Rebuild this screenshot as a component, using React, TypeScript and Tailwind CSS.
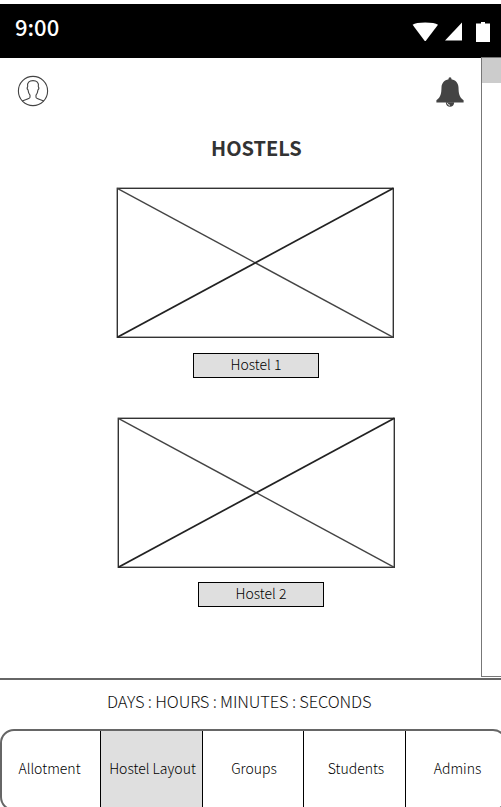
import React from "react";

function StatusBar() {
  return (
    <header className="flex h-[54px] shrink-0 items-start justify-between bg-black pl-[15px] text-white">
      <span className="mt-[6px] text-[22px] leading-[32px] font-medium">9:00</span>
      <div className="mt-[17px] flex items-start">
        <svg className="h-[20px] w-[27px]" viewBox="0 0 27 20" fill="white">
          <path d="M0.6 6.8C2.8 5.4 7 4.6 13.2 4.6S23.8 5.4 26 6.8L13.2 23.6Z" transform="translate(0 -3)" />
        </svg>
        <svg className="ml-[5px] h-[20px] w-[18px]" viewBox="0 0 18 20" fill="white">
          <path d="M18 4.5V22.5H1Z" transform="translate(0 -3)" />
        </svg>
        <svg className="mr-[11px] ml-[14px] h-[22px] w-[14px]" viewBox="0 0 14 22" fill="white">
          <path d="M5 1H9V2.5H14V21H0V2.5H5Z" />
        </svg>
      </div>
    </header>
  );
}

function UserIcon() {
  return (
    <svg className="h-[32px] w-[32px]" viewBox="0 0 32 32" fill="none" stroke="#444" strokeWidth="1.1">
      <circle cx="16" cy="16" r="14.6" />
      <path d="M5.2 25.9C8 24.6 13 24 13 22.3V20.2C11.4 18.5 11.2 16.5 11 14.8C9.8 13.8 10.2 12.3 10.7 11.5C9.8 7.5 12.3 5.6 16 5.6S22.2 7.5 21.3 11.5C21.8 12.3 22.2 13.8 21 14.8C20.8 16.5 20.6 18.5 19 20.2V22.3C19 24 24 24.6 26.8 25.9" />
    </svg>
  );
}

function BellIcon() {
  return (
    <svg className="h-[32px] w-[28px]" viewBox="0 0 28 32" fill="#444">
      <path d="M14 2.2C15 2.2 15.6 3 15.4 4.2C19.8 5 22.3 8 22.5 12.4C22.7 18 23 22 27.6 25.2V27.6H.4V25.2C5 22 5.3 18 5.5 12.4C5.7 8 8.2 5 12.6 4.2C12.4 3 13 2.2 14 2.2Z" />
      <path d="M9.8 27.2H18.2C18.2 33.2 9.8 33.2 9.8 27.2Z" />
      <path d="M11.5 28C11.5 29.3 12.5 30.2 14 30.2" fill="none" stroke="white" strokeWidth=".9" />
    </svg>
  );
}

function Placeholder() {
  return (
    <svg className="block h-[151px] w-[278px]" viewBox="0 0 278 151" fill="none" stroke="#333" strokeWidth="1.4">
      <rect x="1.3" y="1.3" width="276" height="149" />
      <path d="M1.3 1.3L277.3 150.3" stroke="#444" />
      <path d="M1.3 150.3L277.3 1.3" stroke="#222" strokeWidth="1.7" />
    </svg>
  );
}

function HostelButton({ label }: { label: string }) {
  return (
    <button className="flex h-[25px] w-[126px] justify-center border border-black bg-[#dfdfdf] text-[14px] leading-[21px] font-light text-black">
      {label}
    </button>
  );
}

const tabs = [
  { label: "Allotment", style: "w-[98px] pr-[3px]" },
  { label: "Hostel Layout", style: "w-[102px] border-l border-black bg-[#dfdfdf] pl-[2px]" },
  { label: "Groups", style: "w-[101px] border-l border-black pl-[2px]" },
  { label: "Students", style: "w-[102px] border-l border-black pl-[3px]" },
  { label: "Admins", style: "w-[102px] border-l border-black pl-[2px]" },
];

export default function App() {
  return (
    <div className="flex h-[807px] w-[501px] flex-col overflow-hidden bg-white pt-[4px] font-['Noto_Sans_CJK_SC',sans-serif]">
      <StatusBar />
      <div className="flex h-[620px] shrink-0">
        <main className="flex w-[481px] flex-col">
          <div className="flex h-[50px] justify-between pt-[17px] pr-[17px] pl-[17px]">
            <UserIcon />
            <BellIcon />
          </div>
          <h1 className="mt-[24px] ml-[211px] text-[20px] leading-[32px] font-bold text-[#333]">HOSTELS</h1>
          <div className="mt-[23px] ml-[116px]">
            <Placeholder />
          </div>
          <div className="mt-[15px] ml-[193px] flex">
            <HostelButton label="Hostel 1" />
          </div>
          <div className="mt-[39px] ml-[117px]">
            <Placeholder />
          </div>
          <div className="mt-[14px] ml-[198px] flex">
            <HostelButton label="Hostel 2" />
          </div>
        </main>
        <aside className="-mt-px h-[620px] w-[20px] border-t border-b border-l border-[#777] bg-white">
          <div className="h-[25px] bg-[#ccc]" />
        </aside>
      </div>
      <section className="h-[51px] shrink-0 border-t-2 border-[#666] pl-[107px] text-[16.5px] leading-[42px] font-light tracking-[-0.16px] whitespace-nowrap text-[#111]">
        DAYS : HOURS : MINUTES : SECONDS
      </section>
      <nav className="flex h-[82px] w-[507px] shrink-0 overflow-hidden rounded-[14px] border-2 border-[#666]">
        {tabs.map((tab) => (
          <div
            key={tab.label}
            className={`flex h-[78px] shrink-0 justify-center pt-[26px] text-[14px] leading-[22px] font-light text-black ${tab.style}`}
          >
            {tab.label}
          </div>
        ))}
      </nav>
    </div>
  );
}
